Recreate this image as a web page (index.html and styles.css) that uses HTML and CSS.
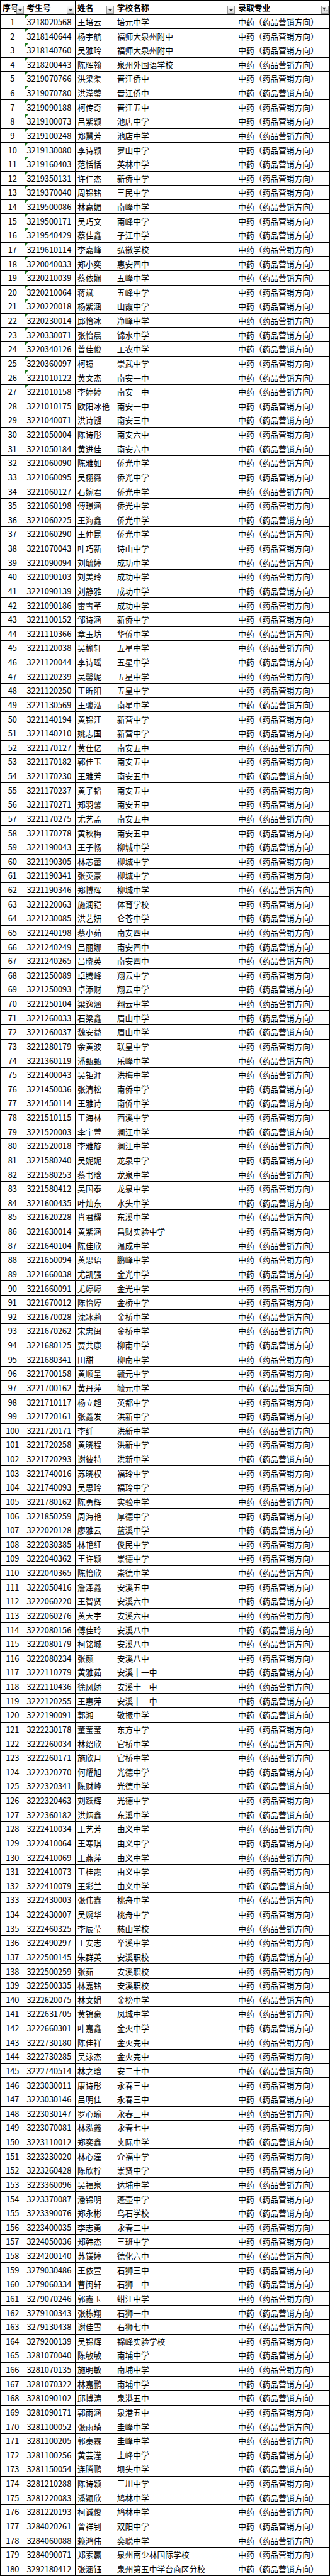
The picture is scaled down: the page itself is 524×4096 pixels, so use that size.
FILE: index.html
```html
<!DOCTYPE html>
<html lang="zh-CN">
<head>
<meta charset="utf-8">
<title>录取名单</title>
<link rel="stylesheet" href="styles.css">
</head>
<body>
<table class="sheet">
<colgroup><col class="c-no"><col class="c-id"><col class="c-name"><col class="c-school"><col class="c-major"></colgroup>
<thead>
<tr><th>序号<span class="fbtn"></span></th><th>考生号<span class="fbtn"></span></th><th>姓名<span class="fbtn"></span></th><th>学校名称<span class="fbtn"></span></th><th>录取专业<span class="fbtn on"><svg viewBox="0 0 12 12" width="10" height="10"><path d="M1 2h7L5.5 5.5V9L3.5 8V5.5Z" fill="#333"/><path d="M8 8h4l-2 2.5Z" fill="#333"/></svg></span></th></tr>
</thead>
<tbody>
<tr><td>1</td><td class="g">3218020568</td><td>王培云</td><td>培元中学</td><td>中药（药品营销方向）</td></tr>
<tr><td>2</td><td class="g">3218140644</td><td>杨宇航</td><td>福师大泉州附中</td><td>中药（药品营销方向）</td></tr>
<tr><td>3</td><td class="g">3218140760</td><td>吴雅玲</td><td>福师大泉州附中</td><td>中药（药品营销方向）</td></tr>
<tr><td>4</td><td class="g">3218200443</td><td>陈晖翰</td><td>泉州外国语学校</td><td>中药（药品营销方向）</td></tr>
<tr><td>5</td><td class="g">3219070766</td><td>洪梁渠</td><td>晋江侨中</td><td>中药（药品营销方向）</td></tr>
<tr><td>6</td><td class="g">3219070780</td><td>洪滢蓥</td><td>晋江侨中</td><td>中药（药品营销方向）</td></tr>
<tr><td>7</td><td class="g">3219090188</td><td>柯传奇</td><td>晋江五中</td><td>中药（药品营销方向）</td></tr>
<tr><td>8</td><td class="g">3219100073</td><td>吕紫颖</td><td>池店中学</td><td>中药（药品营销方向）</td></tr>
<tr><td>9</td><td class="g">3219100248</td><td>郑慧芳</td><td>池店中学</td><td>中药（药品营销方向）</td></tr>
<tr><td>10</td><td class="g">3219130080</td><td>李诗颖</td><td>罗山中学</td><td>中药（药品营销方向）</td></tr>
<tr><td>11</td><td class="g">3219160403</td><td>范恬恬</td><td>英林中学</td><td>中药（药品营销方向）</td></tr>
<tr><td>12</td><td class="g">3219350131</td><td>许仁杰</td><td>新侨中学</td><td>中药（药品营销方向）</td></tr>
<tr><td>13</td><td class="g">3219370040</td><td>周锦铭</td><td>三民中学</td><td>中药（药品营销方向）</td></tr>
<tr><td>14</td><td class="g">3219500086</td><td>林嘉媚</td><td>南峰中学</td><td>中药（药品营销方向）</td></tr>
<tr><td>15</td><td class="g">3219500171</td><td>吴巧文</td><td>南峰中学</td><td>中药（药品营销方向）</td></tr>
<tr><td>16</td><td class="g">3219540429</td><td>蔡佳鑫</td><td>子江中学</td><td>中药（药品营销方向）</td></tr>
<tr><td>17</td><td class="g">3219610114</td><td>李嘉峰</td><td>弘徽学校</td><td>中药（药品营销方向）</td></tr>
<tr><td>18</td><td class="g">3220040033</td><td>郑小奕</td><td>惠安四中</td><td>中药（药品营销方向）</td></tr>
<tr><td>19</td><td class="g">3220210039</td><td>蔡依娴</td><td>五峰中学</td><td>中药（药品营销方向）</td></tr>
<tr><td>20</td><td class="g">3220210064</td><td>蒋斌</td><td>五峰中学</td><td>中药（药品营销方向）</td></tr>
<tr><td>21</td><td class="g">3220220018</td><td>杨紫涵</td><td>山霞中学</td><td>中药（药品营销方向）</td></tr>
<tr><td>22</td><td class="g">3220230014</td><td>邱怡冰</td><td>净峰中学</td><td>中药（药品营销方向）</td></tr>
<tr><td>23</td><td class="g">3220330071</td><td>张怡晨</td><td>锦水中学</td><td>中药（药品营销方向）</td></tr>
<tr><td>24</td><td class="g">3220340126</td><td>曾佳俊</td><td>工农中学</td><td>中药（药品营销方向）</td></tr>
<tr><td>25</td><td class="g">3220360097</td><td>柯镱</td><td>崇武中学</td><td>中药（药品营销方向）</td></tr>
<tr><td>26</td><td class="g">3221010122</td><td>黄文杰</td><td>南安一中</td><td>中药（药品营销方向）</td></tr>
<tr><td>27</td><td class="g">3221010158</td><td>李婷婷</td><td>南安一中</td><td>中药（药品营销方向）</td></tr>
<tr><td>28</td><td>3221010175</td><td>欧阳冰艳</td><td>南安一中</td><td>中药（药品营销方向）</td></tr>
<tr><td>29</td><td>3221040071</td><td>洪诗镪</td><td>南安三中</td><td>中药（药品营销方向）</td></tr>
<tr><td>30</td><td>3221050004</td><td>陈诗彤</td><td>南安六中</td><td>中药（药品营销方向）</td></tr>
<tr><td>31</td><td>3221050184</td><td>黄进佳</td><td>南安六中</td><td>中药（药品营销方向）</td></tr>
<tr><td>32</td><td>3221060090</td><td>陈雅如</td><td>侨光中学</td><td>中药（药品营销方向）</td></tr>
<tr><td>33</td><td>3221060095</td><td>吴栩薇</td><td>侨光中学</td><td>中药（药品营销方向）</td></tr>
<tr><td>34</td><td>3221060127</td><td>石婉君</td><td>侨光中学</td><td>中药（药品营销方向）</td></tr>
<tr><td>35</td><td>3221060198</td><td>傅璟涵</td><td>侨光中学</td><td>中药（药品营销方向）</td></tr>
<tr><td>36</td><td>3221060225</td><td>王海鑫</td><td>侨光中学</td><td>中药（药品营销方向）</td></tr>
<tr><td>37</td><td>3221060290</td><td>王仲昆</td><td>侨光中学</td><td>中药（药品营销方向）</td></tr>
<tr><td>38</td><td>3221070043</td><td>叶巧新</td><td>诗山中学</td><td>中药（药品营销方向）</td></tr>
<tr><td>39</td><td>3221090094</td><td>刘毓婷</td><td>成功中学</td><td>中药（药品营销方向）</td></tr>
<tr><td>40</td><td>3221090103</td><td>刘美玲</td><td>成功中学</td><td>中药（药品营销方向）</td></tr>
<tr><td>41</td><td>3221090139</td><td>刘静雅</td><td>成功中学</td><td>中药（药品营销方向）</td></tr>
<tr><td>42</td><td>3221090186</td><td>雷雪芊</td><td>成功中学</td><td>中药（药品营销方向）</td></tr>
<tr><td>43</td><td>3221100152</td><td>邹诗涵</td><td>新侨中学</td><td>中药（药品营销方向）</td></tr>
<tr><td>44</td><td>3221110366</td><td>章玉坊</td><td>华侨中学</td><td>中药（药品营销方向）</td></tr>
<tr><td>45</td><td>3221120038</td><td>吴榆轩</td><td>五星中学</td><td>中药（药品营销方向）</td></tr>
<tr><td>46</td><td>3221120044</td><td>李诗瑶</td><td>五星中学</td><td>中药（药品营销方向）</td></tr>
<tr><td>47</td><td>3221120239</td><td>吴馨妮</td><td>五星中学</td><td>中药（药品营销方向）</td></tr>
<tr><td>48</td><td>3221120250</td><td>王昕阳</td><td>五星中学</td><td>中药（药品营销方向）</td></tr>
<tr><td>49</td><td>3221130569</td><td>王骏泓</td><td>南星中学</td><td>中药（药品营销方向）</td></tr>
<tr><td>50</td><td>3221140194</td><td>黄锦江</td><td>新营中学</td><td>中药（药品营销方向）</td></tr>
<tr><td>51</td><td>3221140210</td><td>姚志国</td><td>新营中学</td><td>中药（药品营销方向）</td></tr>
<tr><td>52</td><td>3221170127</td><td>黄仕亿</td><td>南安五中</td><td>中药（药品营销方向）</td></tr>
<tr><td>53</td><td>3221170182</td><td>郭佳玉</td><td>南安五中</td><td>中药（药品营销方向）</td></tr>
<tr><td>54</td><td>3221170230</td><td>王雅芳</td><td>南安五中</td><td>中药（药品营销方向）</td></tr>
<tr><td>55</td><td>3221170237</td><td>黄子韬</td><td>南安五中</td><td>中药（药品营销方向）</td></tr>
<tr><td>56</td><td>3221170271</td><td>郑羽馨</td><td>南安五中</td><td>中药（药品营销方向）</td></tr>
<tr><td>57</td><td>3221170275</td><td>尤艺孟</td><td>南安五中</td><td>中药（药品营销方向）</td></tr>
<tr><td>58</td><td>3221170278</td><td>黄秋梅</td><td>南安五中</td><td>中药（药品营销方向）</td></tr>
<tr><td>59</td><td>3221190043</td><td>王子畅</td><td>柳城中学</td><td>中药（药品营销方向）</td></tr>
<tr><td>60</td><td>3221190305</td><td>林芯蕾</td><td>柳城中学</td><td>中药（药品营销方向）</td></tr>
<tr><td>61</td><td>3221190341</td><td>张英豪</td><td>柳城中学</td><td>中药（药品营销方向）</td></tr>
<tr><td>62</td><td>3221190346</td><td>郑博晖</td><td>柳城中学</td><td>中药（药品营销方向）</td></tr>
<tr><td>63</td><td>3221220063</td><td>施润铠</td><td>体育学校</td><td>中药（药品营销方向）</td></tr>
<tr><td>64</td><td>3221230085</td><td>洪艺妍</td><td>仑苍中学</td><td>中药（药品营销方向）</td></tr>
<tr><td>65</td><td>3221240198</td><td>蔡小茹</td><td>南安四中</td><td>中药（药品营销方向）</td></tr>
<tr><td>66</td><td>3221240249</td><td>吕丽娜</td><td>南安四中</td><td>中药（药品营销方向）</td></tr>
<tr><td>67</td><td>3221240265</td><td>吕晓英</td><td>南安四中</td><td>中药（药品营销方向）</td></tr>
<tr><td>68</td><td>3221250089</td><td>卓腾峰</td><td>翔云中学</td><td>中药（药品营销方向）</td></tr>
<tr><td>69</td><td>3221250093</td><td>卓添财</td><td>翔云中学</td><td>中药（药品营销方向）</td></tr>
<tr><td>70</td><td>3221250104</td><td>梁逸涵</td><td>翔云中学</td><td>中药（药品营销方向）</td></tr>
<tr><td>71</td><td>3221260033</td><td>石梁鑫</td><td>眉山中学</td><td>中药（药品营销方向）</td></tr>
<tr><td>72</td><td>3221260037</td><td>魏安益</td><td>眉山中学</td><td>中药（药品营销方向）</td></tr>
<tr><td>73</td><td>3221280179</td><td>余黄波</td><td>联星中学</td><td>中药（药品营销方向）</td></tr>
<tr><td>74</td><td>3221360119</td><td>潘甄甄</td><td>乐峰中学</td><td>中药（药品营销方向）</td></tr>
<tr><td>75</td><td>3221400043</td><td>吴钜涯</td><td>洪梅中学</td><td>中药（药品营销方向）</td></tr>
<tr><td>76</td><td>3221450036</td><td>张清松</td><td>南侨中学</td><td>中药（药品营销方向）</td></tr>
<tr><td>77</td><td>3221450114</td><td>王雅诗</td><td>南侨中学</td><td>中药（药品营销方向）</td></tr>
<tr><td>78</td><td>3221510115</td><td>王海林</td><td>西溪中学</td><td>中药（药品营销方向）</td></tr>
<tr><td>79</td><td>3221520003</td><td>李宇萱</td><td>澜江中学</td><td>中药（药品营销方向）</td></tr>
<tr><td>80</td><td>3221520018</td><td>李雅旋</td><td>澜江中学</td><td>中药（药品营销方向）</td></tr>
<tr><td>81</td><td>3221580240</td><td>吴妮妮</td><td>龙泉中学</td><td>中药（药品营销方向）</td></tr>
<tr><td>82</td><td>3221580253</td><td>蔡书晗</td><td>龙泉中学</td><td>中药（药品营销方向）</td></tr>
<tr><td>83</td><td>3221580412</td><td>吴国泰</td><td>龙泉中学</td><td>中药（药品营销方向）</td></tr>
<tr><td>84</td><td>3221600435</td><td>叶灿东</td><td>水头中学</td><td>中药（药品营销方向）</td></tr>
<tr><td>85</td><td>3221620228</td><td>肖君耀</td><td>东溪中学</td><td>中药（药品营销方向）</td></tr>
<tr><td>86</td><td>3221630014</td><td>黄紫涵</td><td>昌财实验中学</td><td>中药（药品营销方向）</td></tr>
<tr><td>87</td><td>3221640104</td><td>陈佳欣</td><td>温成中学</td><td>中药（药品营销方向）</td></tr>
<tr><td>88</td><td>3221650094</td><td>黄思语</td><td>鹏峰中学</td><td>中药（药品营销方向）</td></tr>
<tr><td>89</td><td>3221660038</td><td>尤凯强</td><td>金光中学</td><td>中药（药品营销方向）</td></tr>
<tr><td>90</td><td>3221660091</td><td>尤婷婷</td><td>金光中学</td><td>中药（药品营销方向）</td></tr>
<tr><td>91</td><td>3221670012</td><td>陈怡婷</td><td>金桥中学</td><td>中药（药品营销方向）</td></tr>
<tr><td>92</td><td>3221670028</td><td>沈冰莉</td><td>金桥中学</td><td>中药（药品营销方向）</td></tr>
<tr><td>93</td><td>3221670262</td><td>宋忠闽</td><td>金桥中学</td><td>中药（药品营销方向）</td></tr>
<tr><td>94</td><td>3221680125</td><td>贾共康</td><td>柳南中学</td><td>中药（药品营销方向）</td></tr>
<tr><td>95</td><td>3221680341</td><td>田甜</td><td>柳南中学</td><td>中药（药品营销方向）</td></tr>
<tr><td>96</td><td>3221700158</td><td>黄顺呈</td><td>毓元中学</td><td>中药（药品营销方向）</td></tr>
<tr><td>97</td><td>3221700162</td><td>黄丹萍</td><td>毓元中学</td><td>中药（药品营销方向）</td></tr>
<tr><td>98</td><td>3221710117</td><td>杨立超</td><td>英都中学</td><td>中药（药品营销方向）</td></tr>
<tr><td>99</td><td>3221720161</td><td>张鑫发</td><td>洪新中学</td><td>中药（药品营销方向）</td></tr>
<tr><td>100</td><td>3221720171</td><td>李纤</td><td>洪新中学</td><td>中药（药品营销方向）</td></tr>
<tr><td>101</td><td>3221720258</td><td>黄晓程</td><td>洪新中学</td><td>中药（药品营销方向）</td></tr>
<tr><td>102</td><td>3221720293</td><td>谢彼特</td><td>洪新中学</td><td>中药（药品营销方向）</td></tr>
<tr><td>103</td><td>3221740016</td><td>苏晓权</td><td>福玲中学</td><td>中药（药品营销方向）</td></tr>
<tr><td>104</td><td>3221740093</td><td>吴思玲</td><td>福玲中学</td><td>中药（药品营销方向）</td></tr>
<tr><td>105</td><td>3221780162</td><td>陈勇辉</td><td>实验中学</td><td>中药（药品营销方向）</td></tr>
<tr><td>106</td><td>3221850259</td><td>周海艳</td><td>厚德中学</td><td>中药（药品营销方向）</td></tr>
<tr><td>107</td><td>3222020128</td><td>廖雅云</td><td>蓝溪中学</td><td>中药（药品营销方向）</td></tr>
<tr><td>108</td><td>3222030385</td><td>林艳红</td><td>俊民中学</td><td>中药（药品营销方向）</td></tr>
<tr><td>109</td><td>3222040362</td><td>王许颖</td><td>崇德中学</td><td>中药（药品营销方向）</td></tr>
<tr><td>110</td><td>3222040365</td><td>陈怡欣</td><td>崇德中学</td><td>中药（药品营销方向）</td></tr>
<tr><td>111</td><td>3222050416</td><td>詹泽鑫</td><td>安溪五中</td><td>中药（药品营销方向）</td></tr>
<tr><td>112</td><td>3222060220</td><td>王智贤</td><td>安溪六中</td><td>中药（药品营销方向）</td></tr>
<tr><td>113</td><td>3222060276</td><td>黄天宇</td><td>安溪六中</td><td>中药（药品营销方向）</td></tr>
<tr><td>114</td><td>3222080156</td><td>傅佳玲</td><td>安溪八中</td><td>中药（药品营销方向）</td></tr>
<tr><td>115</td><td>3222080179</td><td>柯铭城</td><td>安溪八中</td><td>中药（药品营销方向）</td></tr>
<tr><td>116</td><td>3222080234</td><td>张颜</td><td>安溪八中</td><td>中药（药品营销方向）</td></tr>
<tr><td>117</td><td>3222110279</td><td>黄雅茹</td><td>安溪十一中</td><td>中药（药品营销方向）</td></tr>
<tr><td>118</td><td>3222110436</td><td>徐凤娇</td><td>安溪十一中</td><td>中药（药品营销方向）</td></tr>
<tr><td>119</td><td>3222120255</td><td>王惠萍</td><td>安溪十二中</td><td>中药（药品营销方向）</td></tr>
<tr><td>120</td><td>3222190091</td><td>郭湘</td><td>敬振中学</td><td>中药（药品营销方向）</td></tr>
<tr><td>121</td><td>3222230178</td><td>董莹莹</td><td>东方中学</td><td>中药（药品营销方向）</td></tr>
<tr><td>122</td><td>3222260034</td><td>林绍欣</td><td>官桥中学</td><td>中药（药品营销方向）</td></tr>
<tr><td>123</td><td>3222260171</td><td>施欣月</td><td>官桥中学</td><td>中药（药品营销方向）</td></tr>
<tr><td>124</td><td>3222320270</td><td>何耀旭</td><td>光德中学</td><td>中药（药品营销方向）</td></tr>
<tr><td>125</td><td>3222320341</td><td>陈财峰</td><td>光德中学</td><td>中药（药品营销方向）</td></tr>
<tr><td>126</td><td>3222320463</td><td>刘跃辉</td><td>光德中学</td><td>中药（药品营销方向）</td></tr>
<tr><td>127</td><td>3222360182</td><td>洪炳鑫</td><td>东溪中学</td><td>中药（药品营销方向）</td></tr>
<tr><td>128</td><td>3222410034</td><td>王艺芳</td><td>由义中学</td><td>中药（药品营销方向）</td></tr>
<tr><td>129</td><td>3222410064</td><td>王寒琪</td><td>由义中学</td><td>中药（药品营销方向）</td></tr>
<tr><td>130</td><td>3222410069</td><td>王燕萍</td><td>由义中学</td><td>中药（药品营销方向）</td></tr>
<tr><td>131</td><td>3222410073</td><td>王桂霞</td><td>由义中学</td><td>中药（药品营销方向）</td></tr>
<tr><td>132</td><td>3222410079</td><td>王彩兰</td><td>由义中学</td><td>中药（药品营销方向）</td></tr>
<tr><td>133</td><td>3222430003</td><td>张伟鑫</td><td>桃舟中学</td><td>中药（药品营销方向）</td></tr>
<tr><td>134</td><td>3222430007</td><td>吴婉华</td><td>桃舟中学</td><td>中药（药品营销方向）</td></tr>
<tr><td>135</td><td>3222460325</td><td>李辰莹</td><td>慈山学校</td><td>中药（药品营销方向）</td></tr>
<tr><td>136</td><td>3222490297</td><td>王安志</td><td>举溪中学</td><td>中药（药品营销方向）</td></tr>
<tr><td>137</td><td>3222500145</td><td>朱群英</td><td>安溪职校</td><td>中药（药品营销方向）</td></tr>
<tr><td>138</td><td>3222500259</td><td>张茹</td><td>安溪职校</td><td>中药（药品营销方向）</td></tr>
<tr><td>139</td><td>3222500335</td><td>林嘉铭</td><td>安溪职校</td><td>中药（药品营销方向）</td></tr>
<tr><td>140</td><td>3222620075</td><td>林文娟</td><td>金榜中学</td><td>中药（药品营销方向）</td></tr>
<tr><td>141</td><td>3222631705</td><td>黄锦豪</td><td>凤城中学</td><td>中药（药品营销方向）</td></tr>
<tr><td>142</td><td>3222660301</td><td>叶嘉鑫</td><td>金火中学</td><td>中药（药品营销方向）</td></tr>
<tr><td>143</td><td>3222730180</td><td>陈佳祥</td><td>金火完中</td><td>中药（药品营销方向）</td></tr>
<tr><td>144</td><td>3222730285</td><td>吴泳杰</td><td>金火完中</td><td>中药（药品营销方向）</td></tr>
<tr><td>145</td><td>3222740514</td><td>林之晗</td><td>安二十中</td><td>中药（药品营销方向）</td></tr>
<tr><td>146</td><td>3223030011</td><td>康诗彤</td><td>永春三中</td><td>中药（药品营销方向）</td></tr>
<tr><td>147</td><td>3223030146</td><td>吕明佳</td><td>永春三中</td><td>中药（药品营销方向）</td></tr>
<tr><td>148</td><td>3223030147</td><td>罗心瑜</td><td>永春三中</td><td>中药（药品营销方向）</td></tr>
<tr><td>149</td><td>3223070081</td><td>林泓鑫</td><td>永春七中</td><td>中药（药品营销方向）</td></tr>
<tr><td>150</td><td>3223110012</td><td>郑奕鑫</td><td>夹际中学</td><td>中药（药品营销方向）</td></tr>
<tr><td>151</td><td>3223230020</td><td>林心潼</td><td>介福中学</td><td>中药（药品营销方向）</td></tr>
<tr><td>152</td><td>3223260428</td><td>陈欣柠</td><td>崇贤中学</td><td>中药（药品营销方向）</td></tr>
<tr><td>153</td><td>3223360096</td><td>吴福泉</td><td>达埔中学</td><td>中药（药品营销方向）</td></tr>
<tr><td>154</td><td>3223370087</td><td>潘锦明</td><td>蓬壶中学</td><td>中药（药品营销方向）</td></tr>
<tr><td>155</td><td>3223390076</td><td>郑永彬</td><td>乌石学校</td><td>中药（药品营销方向）</td></tr>
<tr><td>156</td><td>3223400035</td><td>李志勇</td><td>永春二中</td><td>中药（药品营销方向）</td></tr>
<tr><td>157</td><td>3224050036</td><td>郑韩杰</td><td>三班中学</td><td>中药（药品营销方向）</td></tr>
<tr><td>158</td><td>3224200140</td><td>苏镁婷</td><td>德化六中</td><td>中药（药品营销方向）</td></tr>
<tr><td>159</td><td>3279030486</td><td>王依萱</td><td>石狮三中</td><td>中药（药品营销方向）</td></tr>
<tr><td>160</td><td>3279060334</td><td>曹闽轩</td><td>石狮二中</td><td>中药（药品营销方向）</td></tr>
<tr><td>161</td><td>3279070246</td><td>郭鑫玉</td><td>蚶江中学</td><td>中药（药品营销方向）</td></tr>
<tr><td>162</td><td>3279100343</td><td>张栋翔</td><td>石狮一中</td><td>中药（药品营销方向）</td></tr>
<tr><td>163</td><td>3279130438</td><td>谢佳雪</td><td>石狮七中</td><td>中药（药品营销方向）</td></tr>
<tr><td>164</td><td>3279200139</td><td>吴锦辉</td><td>锦峰实验学校</td><td>中药（药品营销方向）</td></tr>
<tr><td>165</td><td>3281070040</td><td>陈敏敏</td><td>南埔中学</td><td>中药（药品营销方向）</td></tr>
<tr><td>166</td><td>3281070135</td><td>施明敏</td><td>南埔中学</td><td>中药（药品营销方向）</td></tr>
<tr><td>167</td><td>3281070322</td><td>林嘉鹏</td><td>南埔中学</td><td>中药（药品营销方向）</td></tr>
<tr><td>168</td><td>3281090102</td><td>邱博涛</td><td>泉港五中</td><td>中药（药品营销方向）</td></tr>
<tr><td>169</td><td>3281090171</td><td>郭雨涵</td><td>泉港五中</td><td>中药（药品营销方向）</td></tr>
<tr><td>170</td><td>3281100052</td><td>张雨琦</td><td>圭峰中学</td><td>中药（药品营销方向）</td></tr>
<tr><td>171</td><td>3281100205</td><td>郭秦霖</td><td>圭峰中学</td><td>中药（药品营销方向）</td></tr>
<tr><td>172</td><td>3281100256</td><td>黄芸滢</td><td>圭峰中学</td><td>中药（药品营销方向）</td></tr>
<tr><td>173</td><td>3281150054</td><td>连腾鹏</td><td>坝头中学</td><td>中药（药品营销方向）</td></tr>
<tr><td>174</td><td>3281210288</td><td>陈诗颖</td><td>三川中学</td><td>中药（药品营销方向）</td></tr>
<tr><td>175</td><td>3281220083</td><td>潘颖欣</td><td>鸠林中学</td><td>中药（药品营销方向）</td></tr>
<tr><td>176</td><td>3281220193</td><td>柯诚俊</td><td>鸠林中学</td><td>中药（药品营销方向）</td></tr>
<tr><td>177</td><td>3284020261</td><td>曾祥钊</td><td>双阳中学</td><td>中药（药品营销方向）</td></tr>
<tr><td>178</td><td>3284060088</td><td>赖鸿伟</td><td>奕聪中学</td><td>中药（药品营销方向）</td></tr>
<tr><td>179</td><td>3284090071</td><td>郑素赢</td><td>泉州南少林国际学校</td><td>中药（药品营销方向）</td></tr>
<tr><td>180</td><td>3292180412</td><td>张涵钰</td><td>泉州第五中学台商区分校</td><td>中药（药品营销方向）</td></tr>
</tbody>
</table>
</body>
</html>
```

FILE: styles.css
```css
* { box-sizing: border-box; }
html, body { margin: 0; padding: 0; background: #fff; }
body {
  font-family: "Noto Sans CJK SC", "Noto Sans", sans-serif;
  font-size: 12.75px;
  color: #000;
}
.sheet {
  border-collapse: collapse;
  table-layout: fixed;
  width: 523px;
}
.c-no { width: 38.5px; }
.c-id { width: 80.5px; }
.c-name { width: 62.7px; }
.c-school { width: 192.5px; }
.c-major { width: 148.8px; }
.sheet th, .sheet td {
  border: 1px solid #000;
  height: 22.625px;
  padding: 1px 0 0 3px;
  line-height: 20px;
  white-space: nowrap;
  overflow: hidden;
  text-align: left;
  vertical-align: middle;
  position: relative;
}
.sheet th {
  font-weight: bold;
  padding-left: 3px;
}
.sheet td:first-child { text-align: center; padding-left: 0; }
.fbtn {
  position: absolute;
  right: 1px;
  bottom: 1px;
  width: 12px;
  height: 13px;
  border: 1px solid #9a9a9a;
  background: linear-gradient(#fafafa, #dcdcdc);
  display: flex;
  align-items: center;
  justify-content: center;
}
.fbtn::after {
  content: "";
  border-left: 3px solid transparent;
  border-right: 3px solid transparent;
  border-top: 3px solid #333;
  margin-top: 2px;
}
.fbtn.on::after { display: none; }
.g::before {
  content: "";
  position: absolute;
  left: 0;
  top: 0;
  border-top: 5px solid #1e7b1e;
  border-right: 5px solid transparent;
}
```
